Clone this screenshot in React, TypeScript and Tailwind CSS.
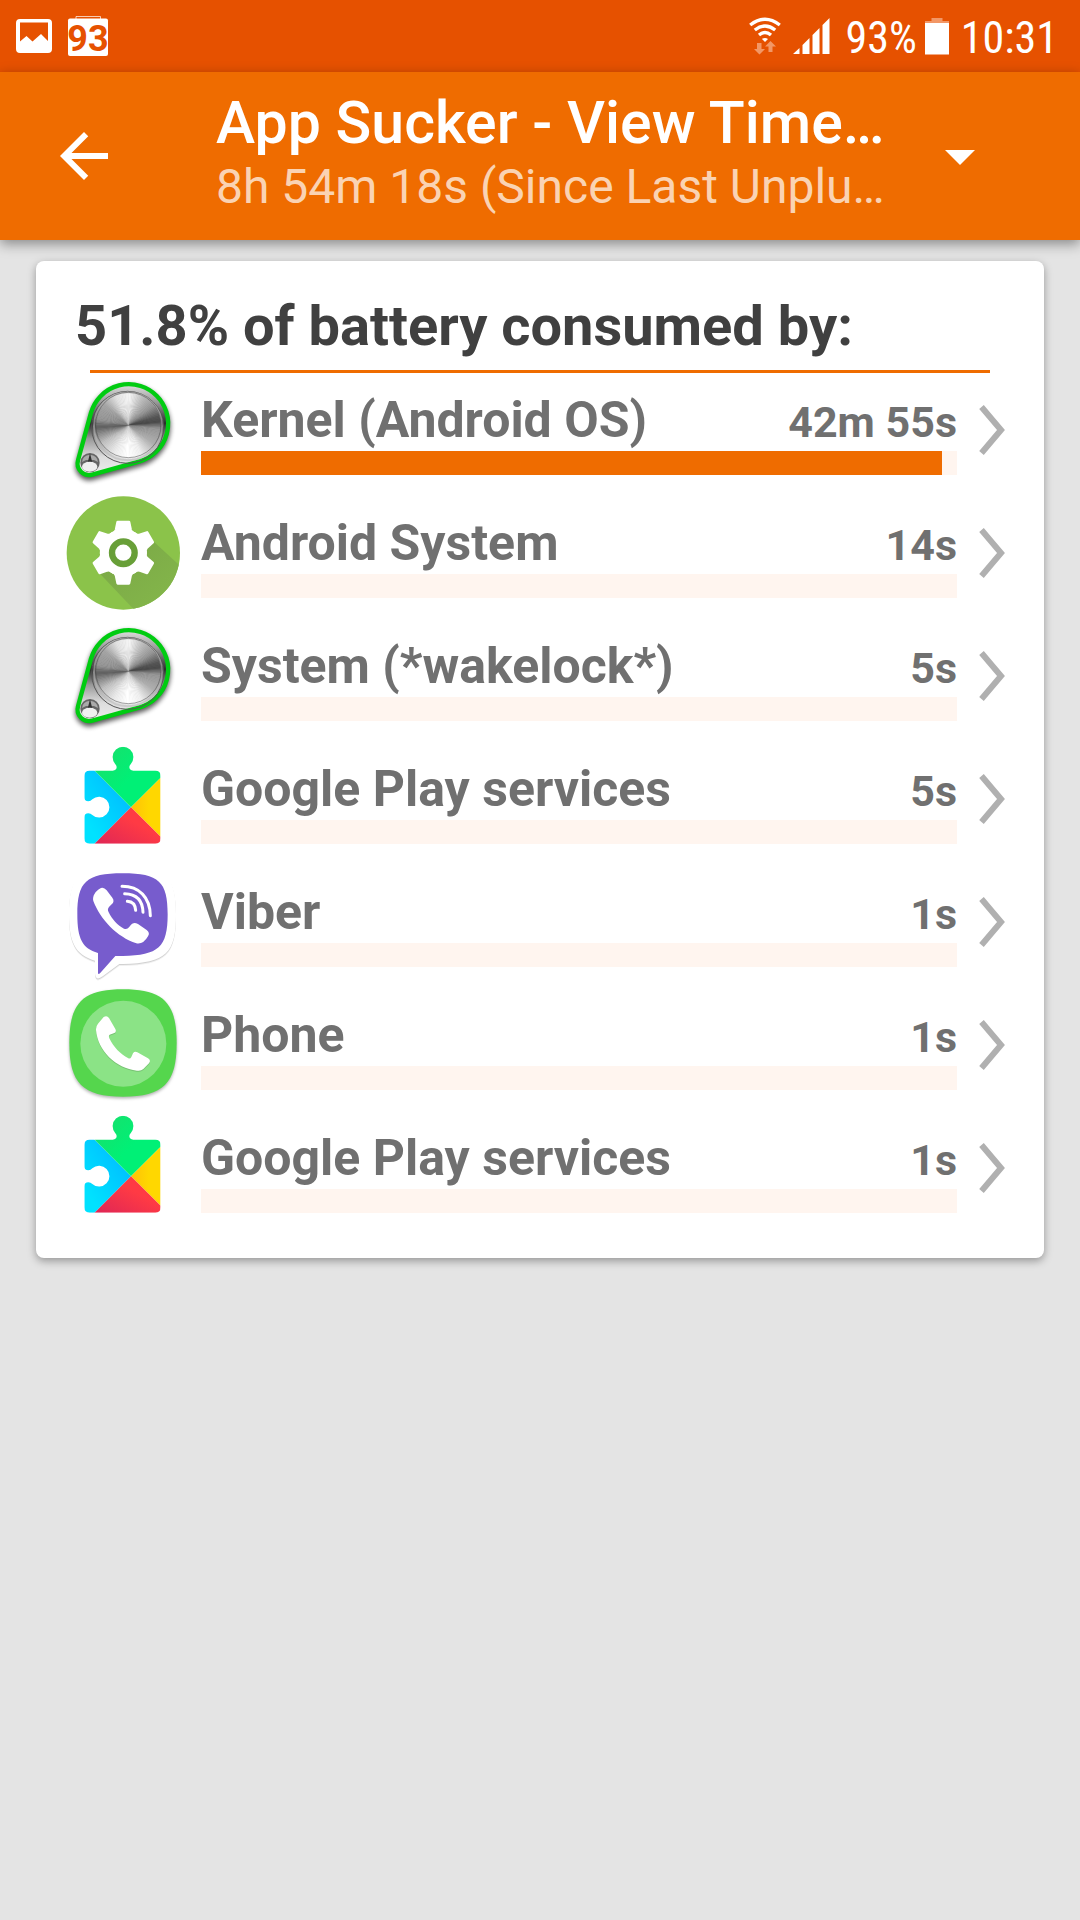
import type { ReactNode } from "react";

function GalleryIcon() {
  return (
    <svg viewBox="0 0 36 34" className="h-[34px] w-9" fill="#fff">
      <path
        fillRule="evenodd"
        d="M4 0H32Q36 0 36 4V30Q36 34 32 34H4Q0 34 0 30V4Q0 0 4 0ZM4 3.500V22.500L10.500 17L16.500 22.500L25 15L32 22V3.500Z"
      />
    </svg>
  );
}

function BatteryLevelIcon() {
  return (
    <svg viewBox="0 0 40 40" className="h-10 w-10 overflow-visible">
      <path d="M8 4V0.500H32.500V4" fill="none" stroke="#fff" strokeOpacity=".7" />
      <rect y="2.500" width="40" height="37.500" rx="2" fill="#fff" />
      <text
        x="20"
        y="34.500"
        textAnchor="middle"
        fill="#e65100"
        className="font-['Roboto'] text-[36px] font-bold"
      >
        93
      </text>
    </svg>
  );
}

function WifiIcon() {
  return (
    <svg viewBox="0 0 32 38" className="h-[38px] w-8">
      <g fill="none" stroke="#fff" strokeWidth="3.400">
        <path d="M1.200 8Q16-3.500 30.800 8" />
        <path d="M5.800 13Q16 5 26.200 13" />
        <path d="M10 18Q16 13 22 18" />
      </g>
      <path d="M13 22Q16 20 19 22L16 25Z" fill="#fff" />
      <path
        d="M8 26H12.500V32H16L10.500 37.500L5 32H8ZM19.500 35V29.500H16L21.500 24L27 29.500H23.500V35Z"
        fill="#f29766"
      />
    </svg>
  );
}

function SignalIcon() {
  return (
    <svg viewBox="0 0 37 36" className="h-9 w-[37px]" fill="#fff">
      <path d="M0 36L6.500 30V36ZM9.500 27L16.500 20V36H9.500ZM19.500 17L26.500 10V36H19.500ZM29.500 7L36.500 0V36H29.500Z" />
    </svg>
  );
}

function BatteryIcon() {
  return (
    <svg viewBox="0 0 24 37" className="h-[37px] w-6">
      <path d="M6.500 0H17.500V3H24V6H0V3H6.500Z" fill="#f29766" />
      <rect y="5" width="24" height="31.500" fill="#fff" />
    </svg>
  );
}

function StatusBar() {
  return (
    <div className="flex h-[72px] items-center justify-between bg-[#e65100] pr-[22px] pl-4 text-white">
      <div className="flex items-center gap-4">
        <GalleryIcon />
        <BatteryLevelIcon />
      </div>
      <div className="flex items-center font-['Roboto_Condensed','Liberation_Sans_Narrow','Roboto',sans-serif] text-[44px] leading-[54px]">
        <WifiIcon />
        <span className="ml-3">
          <SignalIcon />
        </span>
        <span className="ml-4 pt-1">93%</span>
        <span className="ml-2">
          <BatteryIcon />
        </span>
        <span className="ml-3 pt-1">10:31</span>
      </div>
    </div>
  );
}

function AppBar() {
  return (
    <header className="relative flex items-center bg-[#ef6c00] text-white shadow-[0_4px_12px_rgba(0,0,0,0.4)]">
      <button type="button" aria-label="Back" className="ml-12 shrink-0">
        <svg viewBox="0 0 24 24" className="h-[72px] w-[72px]" fill="currentColor">
          <path d="M20 11H7.830l5.590-5.590L12 4l-8 8 8 8 1.410-1.410L7.830 13H20v-2z" />
        </svg>
      </button>
      <div className="ml-24 min-w-0 flex-1 pt-4 pb-6">
        <h1 className="truncate text-[59px] leading-[70px] font-medium">App Sucker - View Time…</h1>
        <p className="truncate text-[48px] leading-[58px] text-[#fad3b3]">
          8h 54m 18s (Since Last Unplu…
        </p>
      </div>
      <button type="button" aria-label="Change period" className="mr-[84px] shrink-0">
        <svg viewBox="0 0 24 24" className="h-[72px] w-[72px]" fill="currentColor">
          <path d="M7 10l5 5 5-5z" />
        </svg>
      </button>
    </header>
  );
}

// brushed metal: [angle, grey level], clockwise from the top
const METAL_STOPS = [
  [0, 245], [25, 190], [50, 150], [72, 85], [82, 75], [95, 150], [125, 175], [155, 240],
  [180, 255], [205, 235], [235, 190], [255, 130], [265, 95], [280, 150], [310, 165],
  [335, 225], [360, 245],
];

function greyAt(angle: number) {
  const next = METAL_STOPS.findIndex(([stop]) => stop > angle);
  const [a0, g0] = METAL_STOPS[next - 1];
  const [a1, g1] = METAL_STOPS[next];
  return Math.round(g0 + ((g1 - g0) * (angle - a0)) / (a1 - a0));
}

function MetalDisc({ cx, cy, r }: { cx: number; cy: number; r: number }) {
  const step = 3;
  const point = (deg: number) => {
    const rad = (deg * Math.PI) / 180;
    return `${cx + r * Math.sin(rad)} ${cy - r * Math.cos(rad)}`;
  };
  return (
    <g>
      {Array.from({ length: 360 / step }, (_, i) => {
        const grey = greyAt(i * step);
        return (
          <path
            key={i}
            d={`M${cx} ${cy}L${point(i * step)}L${point((i + 1) * step + 0.8)}Z`}
            fill={`rgb(${grey},${grey},${grey})`}
          />
        );
      })}
    </g>
  );
}

function AppIcon({ top, children }: { top: number; children: ReactNode }) {
  return (
    <svg
      viewBox={`18 ${top} 342 342`}
      className="h-[114px] w-[114px] shrink-0 overflow-visible"
      aria-hidden="true"
    >
      {children}
    </svg>
  );
}

function KernelIcon() {
  const outline = "M93 128A118 118 0 1 1 239 274L97 314A35 35 0 0 1 54 271Z";
  return (
    <AppIcon top={9}>
      <defs>
        <linearGradient id="plate" x1="0" y1="0" x2="0" y2="1">
          <stop offset="0" stopColor="#e0e0e0" />
          <stop offset=".2" stopColor="#999" />
          <stop offset=".43" stopColor="#2c2c2c" />
          <stop offset=".6" stopColor="#999" />
          <stop offset=".8" stopColor="#ddd" />
          <stop offset="1" stopColor="#eee" />
        </linearGradient>
        <filter id="kernelShadow" x="-20%" y="-20%" width="140%" height="140%">
          <feGaussianBlur stdDeviation="8" />
        </filter>
      </defs>
      <path
        d={outline}
        transform="translate(0 9)"
        stroke="#000"
        strokeWidth="14"
        opacity=".65"
        filter="url(#kernelShadow)"
      />
      <path d={outline} fill="url(#plate)" stroke="#0c1" strokeWidth="13" />
      <circle cx="203" cy="172" r="108" fill="none" stroke="#555" strokeWidth="3" />
      <MetalDisc cx={205} cy={166} r={99} />
      <circle cx="204" cy="169" r="102" fill="none" stroke="#bbb" strokeOpacity=".6" strokeWidth="6" />
      <circle cx="205" cy="165" r="98" fill="none" stroke="#444" strokeOpacity=".5" strokeWidth="3" />
      <circle cx="90" cy="278" r="29" fill="#666" />
      <path d="M66 276Q68 256 90 254Q112 256 114 276L102 270H78Z" fill="#aaa" />
      <path d="M90 250L98 282H82Z" fill="#333" />
      <ellipse cx="89" cy="290" rx="23" ry="15" fill="#f0f0f0" />
    </AppIcon>
  );
}

function AndroidSystemIcon() {
  return (
    <AppIcon top={18}>
      <defs>
        <clipPath id="systemDisc">
          <circle cx="190" cy="189" r="170" />
        </clipPath>
        <linearGradient id="systemShadow" x1="0" y1="0" x2="1" y2="1">
          <stop offset=".2" stopColor="#7caa47" />
          <stop offset=".8" stopColor="#83b54a" />
        </linearGradient>
      </defs>
      <circle cx="190" cy="189" r="170" fill="#8bc34a" />
      <path
        d="M120 251L225 362L380 300V246L280 154L190 190Z"
        fill="url(#systemShadow)"
        clipPath="url(#systemDisc)"
      />
      <g transform="translate(190 188)" fill="#fff" stroke="#fff" strokeWidth="8" strokeLinejoin="round">
        <circle r="66" />
        {[0, 60, 120, 180, 240, 300].map((deg) => (
          <path key={deg} d="M-17-92H17L22-68Q24-60 36-56H-36Q-24-60-22-68Z" transform={`rotate(${deg})`} />
        ))}
      </g>
      <circle cx="190" cy="188" r="34" fill="#fff" stroke="#689f38" strokeWidth="19" />
    </AppIcon>
  );
}

function PlayServicesIcon() {
  return (
    <AppIcon top={6}>
      <defs>
        <clipPath id="puzzle">
          <path d="M89 92H158Q170 91 170 81Q170 76 165 71A31 31 0 1 1 213 71Q208 76 208 81Q208 91 220 92H286Q302 92 302 108V295Q302 311 286 311H89Q73 311 73 295V232Q73 220 85 220Q92 220 97 225A31 31 0 1 0 97 178Q92 184 85 184Q73 184 73 172V108Q73 92 89 92Z" />
        </clipPath>
        <linearGradient id="playBlue" x1="1" y1="0" x2="0" y2="1">
          <stop offset=".2" stopColor="#00beff" />
          <stop offset=".8" stopColor="#00e2ff" />
        </linearGradient>
        <linearGradient id="playGreen" x1="0" y1="0" x2="1" y2="1">
          <stop offset=".1" stopColor="#17e06c" />
          <stop offset=".55" stopColor="#00f076" />
        </linearGradient>
        <linearGradient id="playRed" x1="1" y1="0" x2="0" y2="1">
          <stop offset=".4" stopColor="#ff3a44" />
          <stop offset="1" stopColor="#de2656" />
        </linearGradient>
        <linearGradient id="playYellow">
          <stop offset="0" stopColor="#ffc107" />
          <stop offset=".6" stopColor="#ffd700" />
        </linearGradient>
      </defs>
      <g clipPath="url(#puzzle)">
        <path d="M60 80H92L213 202L103 312H60Z" fill="url(#playBlue)" />
        <path d="M104 92V10H302V113L213 202Z" fill="url(#playGreen)" />
        <path d="M302 113L213 202L302 290Z" fill="url(#playYellow)" />
        <path d="M213 202L302 290V312H103Z" fill="url(#playRed)" />
      </g>
    </AppIcon>
  );
}

function ViberIcon() {
  return (
    <AppIcon top={15}>
      <path
        d="M188 17C320 17 348 50 348 163C348 278 320 310 188 312H178L128 349Q106 365 105 340V302C45 285 27 245 27 163C27 50 56 17 188 17Z"
        fill="#fff"
        className="drop-shadow-[0_4px_2px_rgba(0,0,0,0.18)]"
      />
      <path
        d="M188 40C298 40 323 66 323 163C323 262 296 286 188 288H166L120 340Q114 345 114 338V279C67 266 52 236 52 163C52 66 78 40 188 40Z"
        fill="#775ccd"
      />
      <path
        d="M119 86Q130 79 140 91L157 113Q165 124 155 133L147 141Q141 148 146 157C157 179 173 197 192 206Q201 210 207 202L213 194Q221 185 234 192L260 210Q271 218 264 229Q250 254 229 250C171 231 121 178 100 123C96 108 107 93 119 86Z"
        fill="#fff"
      />
      <g fill="none" stroke="#fff" strokeWidth="9" strokeLinecap="round">
        <path d="M186 79C238 79 270 112 271 167" />
        <path d="M194 101C230 102 248 121 249 157" />
        <path d="M202 124C218 125 226 134 227 151" />
      </g>
    </AppIcon>
  );
}

function PhoneIcon() {
  return (
    <AppIcon top={24}>
      <path
        d="M189 28C310 28 350 68 350 189C350 310 310 350 189 350C68 350 28 310 28 189C28 68 68 28 189 28Z"
        fill="#55d64d"
        className="drop-shadow-[0_5px_4px_rgba(0,0,0,0.3)]"
      />
      <circle cx="190" cy="191" r="129" fill="#8be386" />
      <path
        d="M131 111Q141 105 147 114L166 147Q171 157 161 160L149 164Q145 168 148 175C161 201 180 222 205 235Q211 237 214 231L219 220Q224 213 232 217L264 235Q274 241 267 250L250 267Q243 274 231 272C167 265 113 212 108 150Q107 140 114 131Z"
        fill="#fff"
        className="drop-shadow-[0_3px_2px_rgba(0,0,0,0.15)]"
      />
    </AppIcon>
  );
}

const usage = [
  { name: "Kernel (Android OS)", time: "42m 55s", percent: 98, Icon: KernelIcon },
  { name: "Android System", time: "14s", percent: 0, Icon: AndroidSystemIcon },
  { name: "System (*wakelock*)", time: "5s", percent: 0, Icon: KernelIcon },
  { name: "Google Play services", time: "5s", percent: 0, Icon: PlayServicesIcon },
  { name: "Viber", time: "1s", percent: 0, Icon: ViberIcon },
  { name: "Phone", time: "1s", percent: 0, Icon: PhoneIcon },
  { name: "Google Play services", time: "1s", percent: 0, Icon: PlayServicesIcon },
];

function UsageRow({ name, time, percent, Icon }: (typeof usage)[number]) {
  return (
    <li>
      <a href="#" className="flex items-center">
        <Icon />
        <div className="ml-[21px] h-[114px] min-w-0 flex-1 pt-4">
          <div className="flex h-[62px] items-baseline justify-between font-bold text-[#707070]">
            <span className="truncate text-[50px] leading-[62px]">{name}</span>
            <span className="shrink-0 text-[43px] leading-[50px]">{time}</span>
          </div>
          <div className="h-6 bg-[#fff5ef]">
            <div className="h-full bg-[#ef6c00]" style={{ width: `${percent}%` }} />
          </div>
        </div>
        <svg viewBox="0 0 28 52" className="ml-[21px] h-[52px] w-7 shrink-0" fill="none">
          <path d="M3.500 3L23 26L3.500 49" stroke="#b0b0b0" strokeWidth="6" />
        </svg>
      </a>
    </li>
  );
}

export default function App() {
  return (
    <div className="min-h-screen bg-[#e4e4e4] font-['Roboto',sans-serif]">
      <StatusBar />
      <AppBar />
      <main className="mx-9 mt-[21px] rounded-lg bg-white pt-8 pr-[38px] pb-[33px] pl-[30px] shadow-[0_3px_8px_rgba(0,0,0,0.35)]">
        <h2 className="ml-[9px] text-[56px] leading-[66px] font-bold text-[#404040]">
          51.8% of battery consumed by:
        </h2>
        <div className="mt-[11px] mr-4 ml-6 h-[3px] bg-[#ef6c00]" />
        <ul className="space-y-[9px]">
          {usage.map((item, index) => (
            <UsageRow key={index} {...item} />
          ))}
        </ul>
      </main>
    </div>
  );
}
